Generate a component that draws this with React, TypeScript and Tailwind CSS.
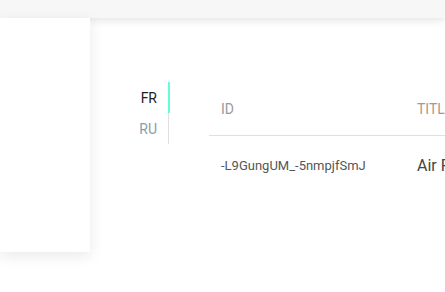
import React from "react";

export default function App() {
  return (
    <div className="relative w-[445px] h-[292px] bg-white overflow-hidden" style={{ fontFamily: "Roboto, 'Noto Sans', sans-serif" }}>
      <div className="relative z-10 h-[18px] w-full bg-[#f7f7f7] shadow-[0_2px_10px_rgba(0,0,0,0.12)]" />
      <div className="flex">
        <div className="relative z-20 w-[90px] h-[234px] bg-white shadow-[0_4px_14px_rgba(0,0,0,0.09)] shrink-0" />
        <div className="flex pt-[64px] pl-[40px]">
          <div className="flex flex-col w-[39px] border-r border-[#e0e0e0] h-[62px]">
            <div className="relative h-[31px] flex items-center justify-end pr-[11px] pt-[1px] text-[14px] text-[#222]">
              FR
              <div className="absolute right-[-2px] top-0 h-full w-[2px] bg-[#64ffda]" />
            </div>
            <div className="h-[31px] flex items-center justify-end pr-[11px] pt-[1px] text-[14px] text-[#8e9aaa]">RU</div>
          </div>
          <div className="ml-[40px] w-[300px]">
            <div className="flex h-[54px] items-center pt-[1px] border-b border-[#e0e0e0] text-[14px] text-[#9a9a9a]">
              <div className="w-[196px] pl-[12px]">ID</div>
              <div className="pl-[12px] whitespace-nowrap text-[#a89890]">TITLE</div>
            </div>
            <div className="flex h-[58px] items-center pt-[1px] whitespace-nowrap">
              <div className="w-[196px] pl-[12px] text-[13px] text-[#555]">-L9GungUM_-5nmpjfSmJ</div>
              <div className="pl-[12px] text-[16px] text-[#444]">Air France</div>
            </div>
          </div>
        </div>
      </div>
    </div>
  );
}
